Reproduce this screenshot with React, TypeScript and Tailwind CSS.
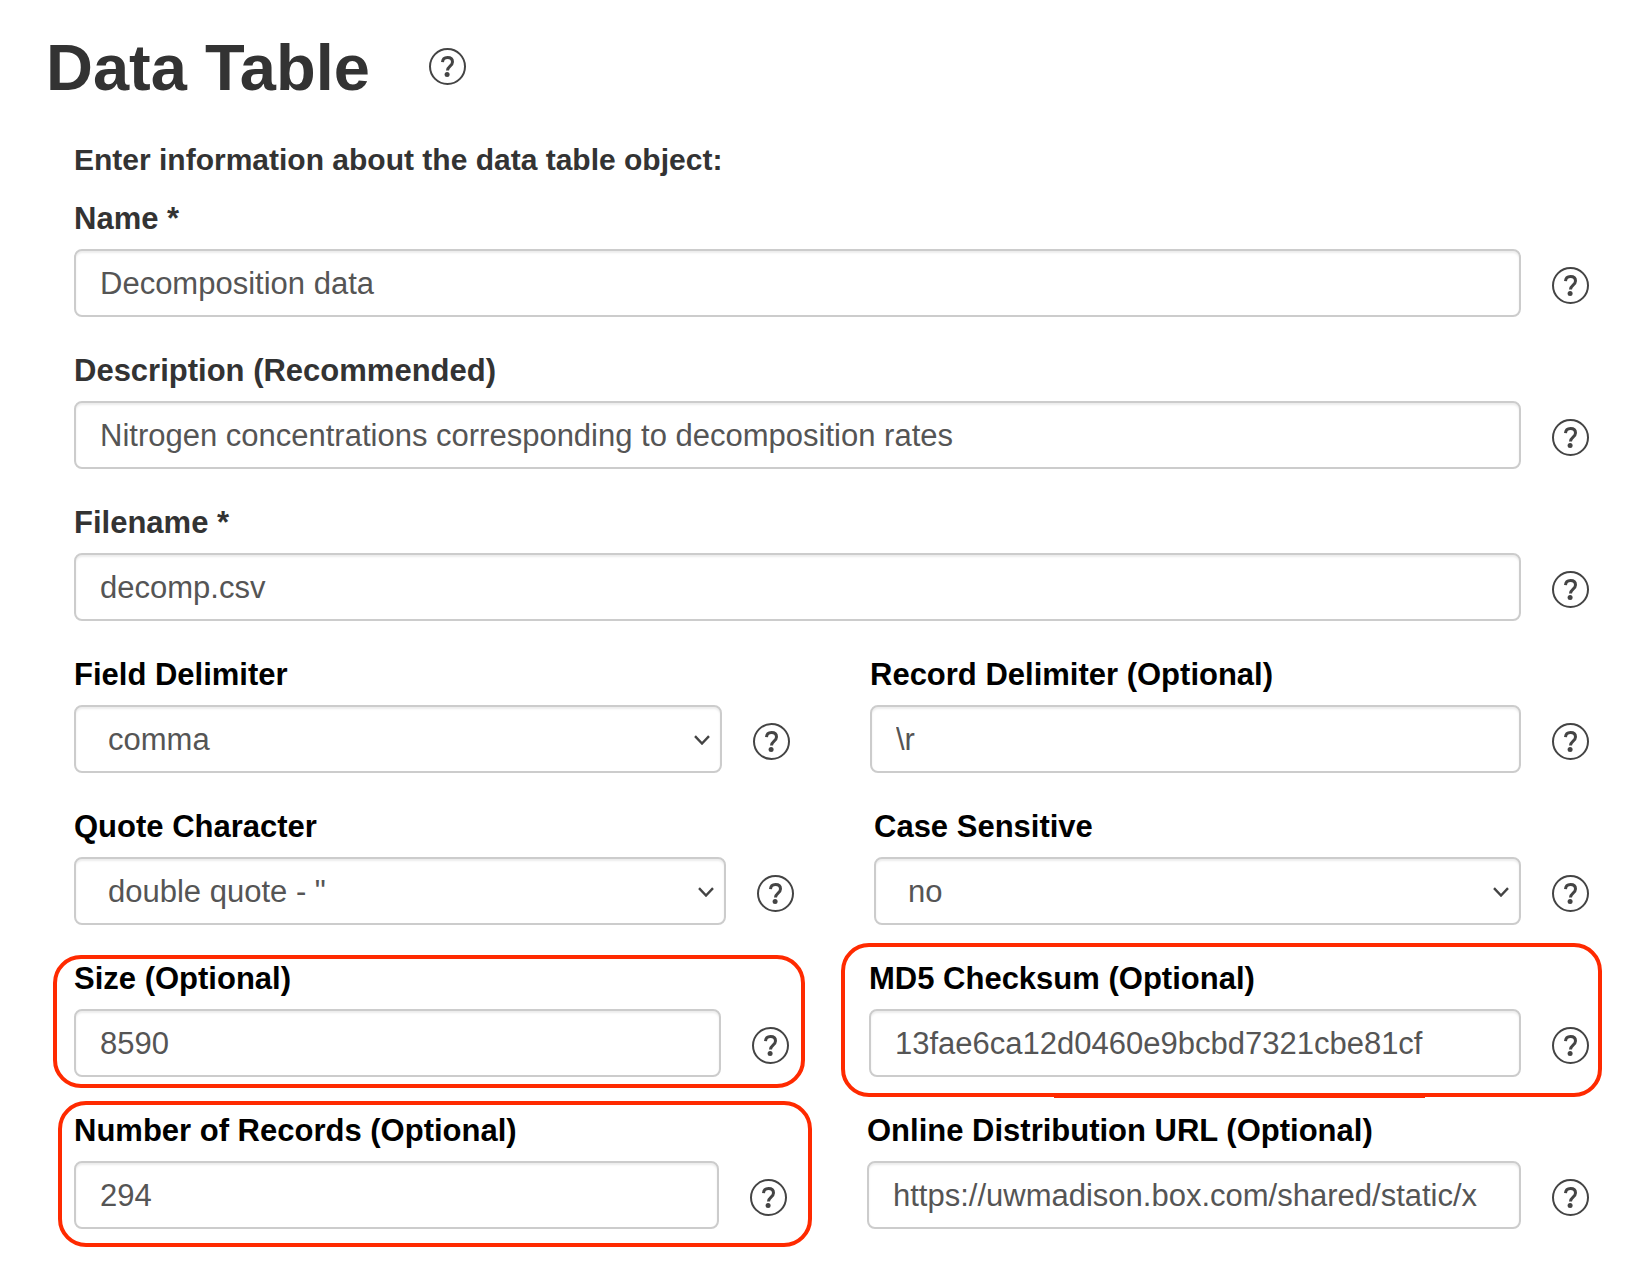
import type { ReactNode } from "react";
import clsx from "clsx";

interface FieldProps {
    id: string;
    label: string;
    children: ReactNode;
    dark?: boolean;
    highlight?: string;
    underline?: boolean;
}

const controlClass =
    "h-[68px] w-full min-w-0 appearance-none rounded-lg border-2 border-[#cccccc] bg-white pt-0.5 text-[31px] text-[#555555] shadow-[inset_0_2px_2px_rgba(0,0,0,0.075)] outline-none";

function HelpButton({ topic }: { topic: string }) {
    return (
        <button type="button" aria-label={`Help: ${topic}`} className="size-[37px] shrink-0 cursor-pointer">
            <svg viewBox="0 0 37 37" fill="none" className="size-full">
                <circle cx="18.5" cy="18.5" r="17.5" stroke="#444444" strokeWidth="2" />
                <path
                    d="M13.5 14.2c0.2-3.1 2.2-4.7 5-4.7 3 0 5 1.7 5 4.4 0 4.1-5 4.2-5 8.6"
                    stroke="#444444"
                    strokeWidth="3"
                />
                <circle cx="18.1" cy="26.6" r="2.5" fill="#444444" />
            </svg>
        </button>
    );
}

function Field({ id, label, children, dark = false, highlight, underline = false }: FieldProps) {
    return (
        <div className="relative min-w-0">
            <label
                htmlFor={id}
                className={clsx("mb-2.5 block text-[31px] leading-10 font-bold", dark ? "text-black" : "text-[#333333]")}
            >
                {label}
            </label>
            <div className="flex items-center gap-[31px]">
                {children}
                <div className="mt-1 flex">
                    <HelpButton topic={label} />
                </div>
            </div>
            {highlight && (
                <div className={clsx("pointer-events-none absolute rounded-[28px] border-4 border-[#ff2a00]", highlight)}>
                    {underline && <div className="absolute right-[173px] -bottom-[5px] left-[209px] h-px bg-[#ff2a00]" />}
                </div>
            )}
        </div>
    );
}

function TextInput({ id, value }: { id: string; value: string }) {
    return <input id={id} type="text" defaultValue={value} className={clsx(controlClass, "px-6")} />;
}

function Select({ id, options }: { id: string; options: string[] }) {
    return (
        <div className="relative min-w-0 flex-1">
            <select id={id} className={clsx(controlClass, "px-8")}>
                {options.map((option) => (
                    <option key={option}>{option}</option>
                ))}
            </select>
            <svg
                viewBox="0 0 16 10"
                fill="none"
                className="pointer-events-none absolute top-[30px] right-3 h-2.5 w-4"
            >
                <path d="M1 1.2l7 7.3 7-7.3" stroke="#444444" strokeWidth="2.4" />
            </svg>
        </div>
    );
}

export default function App() {
    return (
        <main className="min-h-screen bg-white pt-6 pr-[55px] pb-7 pl-[46px] font-['Liberation_Sans',Arial,sans-serif]">
            <div className="flex items-center gap-[59px]">
                <h1 className="pt-1 text-[65px] leading-[80px] font-bold text-[#333333]">Data Table</h1>
                <HelpButton topic="Data Table" />
            </div>
            <form className="mt-8 pl-7">
                <p className="text-[30px] leading-10 font-bold text-[#333333]">
                    Enter information about the data table object:
                </p>
                <div className="mt-[19px] flex flex-col gap-[34px]">
                    <Field id="name" label="Name *">
                        <TextInput id="name" value="Decomposition data" />
                    </Field>
                    <Field id="description" label="Description (Recommended)">
                        <TextInput id="description" value="Nitrogen concentrations corresponding to decomposition rates" />
                    </Field>
                    <Field id="filename" label="Filename *">
                        <TextInput id="filename" value="decomp.csv" />
                    </Field>
                    <div className="grid grid-cols-[716fr_719fr] gap-20">
                        <Field id="field-delimiter" label="Field Delimiter" dark>
                            <Select id="field-delimiter" options={["comma", "space", "tab"]} />
                        </Field>
                        <Field id="record-delimiter" label="Record Delimiter (Optional)" dark>
                            <TextInput id="record-delimiter" value="\r" />
                        </Field>
                    </div>
                    <div className="grid grid-cols-[720fr_715fr] gap-20">
                        <Field id="quote-character" label="Quote Character" dark>
                            <Select id="quote-character" options={['double quote - "', "single quote - '"]} />
                        </Field>
                        <Field id="case-sensitive" label="Case Sensitive" dark>
                            <Select id="case-sensitive" options={["no", "yes"]} />
                        </Field>
                    </div>
                    <div className="grid grid-cols-[715fr_720fr] gap-20">
                        <Field id="size" label="Size (Optional)" dark highlight="-top-1 -right-4 -bottom-[11px] -left-[21px]">
                            <TextInput id="size" value="8590" />
                        </Field>
                        <Field
                            id="checksum"
                            label="MD5 Checksum (Optional)"
                            dark
                            highlight="-top-4 -right-[13px] -bottom-5 -left-7"
                            underline
                        >
                            <TextInput id="checksum" value="13fae6ca12d0460e9bcbd7321cbe81cf" />
                        </Field>
                    </div>
                    <div className="grid grid-cols-[713fr_722fr] gap-20">
                        <Field
                            id="records"
                            label="Number of Records (Optional)"
                            dark
                            highlight="-top-2.5 -right-[25px] -bottom-[18px] -left-4"
                        >
                            <TextInput id="records" value="294" />
                        </Field>
                        <Field id="url" label="Online Distribution URL (Optional)" dark>
                            <TextInput id="url" value="https://uwmadison.box.com/shared/static/x" />
                        </Field>
                    </div>
                </div>
            </form>
        </main>
    );
}
